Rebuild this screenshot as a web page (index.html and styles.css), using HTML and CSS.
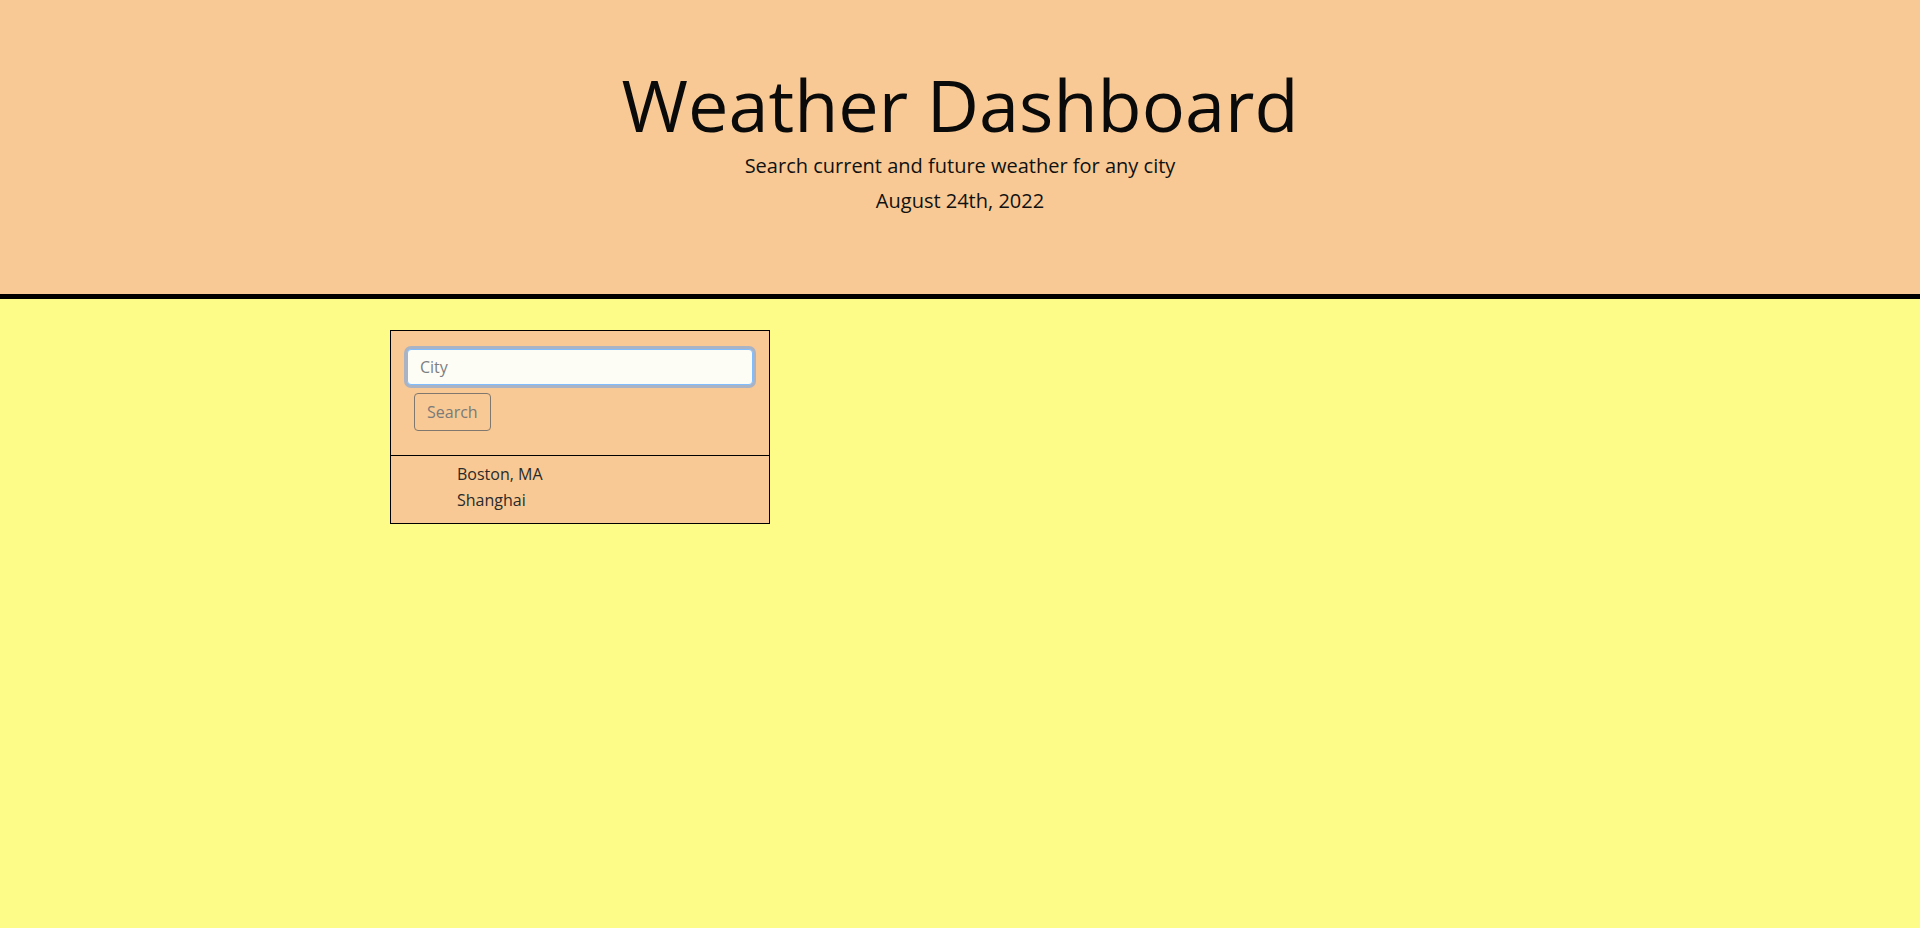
FILE: index.html
```html
<!DOCTYPE html>
<html lang="en">
<head>
<meta charset="utf-8">
<title>Weather Dashboard</title>
<link rel="stylesheet" href="styles.css">
</head>
<body>
<header class="hero">
  <h1 class="hero-title">Weather Dashboard</h1>
  <p class="hero-lead">Search current and future weather for any city</p>
  <p class="hero-date">August 24th, 2022</p>
</header>
<main class="page">
  <aside class="search-card">
    <form class="search-form">
      <input class="city-input" type="text" placeholder="City" autofocus>
      <button class="search-btn" type="button">Search</button>
    </form>
    <ul class="history">
      <li>Boston, MA</li>
      <li>Shanghai</li>
    </ul>
  </aside>
</main>
</body>
</html>
```

FILE: styles.css
```css
html, body {
  margin: 0;
  padding: 0;
}

body {
  font-family: "Open Sans", "DejaVu Sans", sans-serif;
  background: #fdfc89;
  color: #111;
  min-height: 928px;
}

.hero {
  background: #f8c994;
  border-bottom: 5px solid #000;
  padding: 61px 0 78px;
  text-align: center;
}

.hero-title {
  margin: 0;
  font-size: 72px;
  font-weight: 400;
  line-height: 86px;
  color: #0a0a0a;
}

.hero-lead {
  margin: 4px 0 0;
  font-size: 20px;
  font-weight: 400;
  line-height: 30px;
}

.hero-date {
  margin: 5px 0 0;
  font-size: 20px;
  font-weight: 400;
  line-height: 30px;
}

.page {
  width: 1140px;
  margin: 0 auto;
  padding-top: 31px;
}

.search-card {
  box-sizing: border-box;
  width: 380px;
  border: 1px solid #000;
  background: #f8c994;
}

.search-form {
  display: flex;
  flex-direction: column;
  align-items: flex-start;
  gap: 8px;
  padding: 18px 16px 24px;
  border-bottom: 1px solid #000;
  margin: 0;
}

.city-input {
  box-sizing: border-box;
  width: 100%;
  height: 36px;
  padding: 6px 12px;
  font-family: "Open Sans", "DejaVu Sans", sans-serif;
  font-size: 16px;
  color: #495057;
  background: #fdfdf6;
  border: 1px solid #80bdff;
  border-radius: 4px;
  box-shadow: 0 0 0 3px #aab3c4;
  outline: none;
}

.city-input::placeholder {
  color: #7c7f82;
}

.search-btn {
  box-sizing: border-box;
  margin-left: 7px;
  height: 38px;
  padding: 6px 12px;
  font-family: "Open Sans", "DejaVu Sans", sans-serif;
  font-size: 16px;
  line-height: 24px;
  color: #7a7a7a;
  background: transparent;
  border: 1px solid #80786e;
  border-radius: 4px;
}

.history {
  list-style: none;
  margin: 0;
  padding: 5px 0 10px 66px;
  font-size: 16px;
  line-height: 26px;
  color: #2a2a2a;
}
```
